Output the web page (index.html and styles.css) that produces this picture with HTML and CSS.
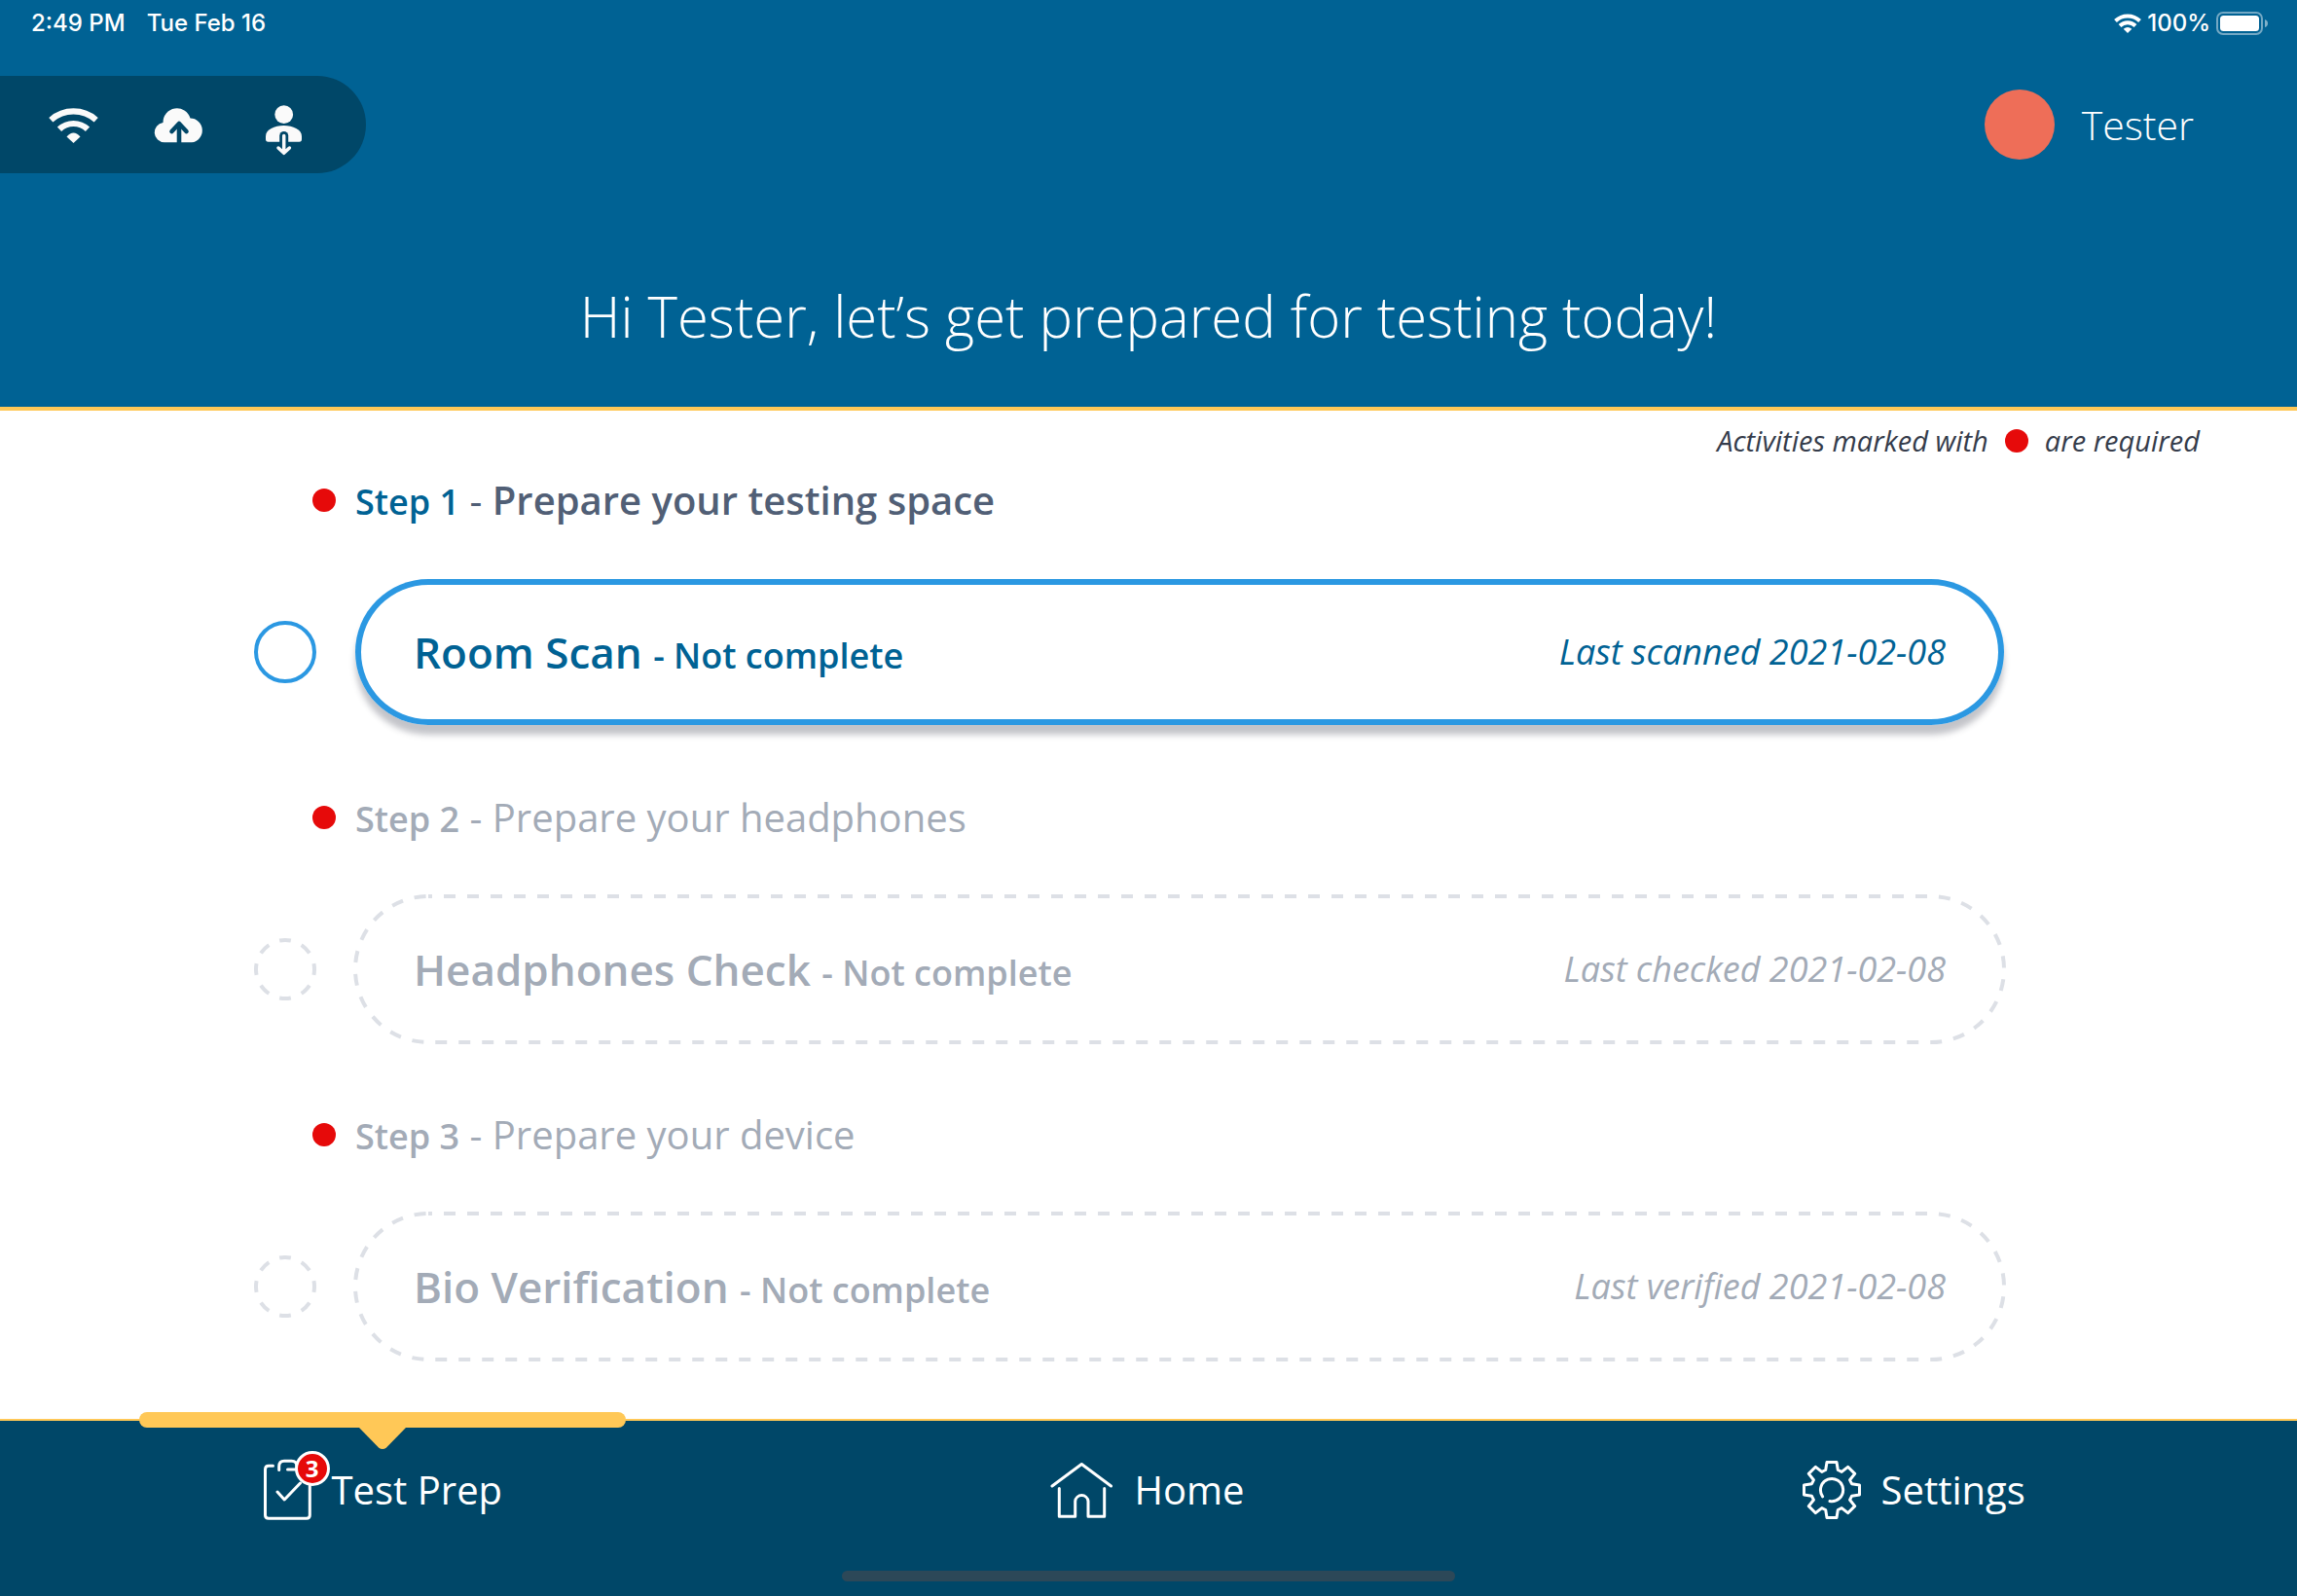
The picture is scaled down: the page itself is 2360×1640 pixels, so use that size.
FILE: index.html
```html
<!DOCTYPE html>
<html lang="en">
<head>
<meta charset="utf-8">
<meta name="viewport" content="width=device-width, initial-scale=1">
<title>Test Prep</title>
<link rel="stylesheet" href="styles.css">
</head>
<body>
<div class="app">
  <header class="header">
    <div class="status-bar">
      <div class="status-group status-left"><span>2:49 PM</span><span>Tue Feb 16</span></div>
      <div class="status-group status-right">
        <svg width="28" height="20" viewBox="0 0 28 20" aria-hidden="true">
          <g fill="none" stroke="#fff" stroke-width="4"><path d="M1.500 7.500A18 18 0 0 1 26.500 7.500"/><path d="M6 12.500A11.500 11.500 0 0 1 22 12.500"/></g>
          <path fill="#fff" d="M9.700 15.800Q14 12 18.300 15.800L14 20Z"/>
        </svg>
        <span>100%</span>
        <svg width="54" height="24" viewBox="0 0 54 24" aria-hidden="true">
          <rect x="1" y="1" width="46" height="22" rx="6" fill="none" stroke="#fff" stroke-opacity=".45" stroke-width="2"/>
          <rect x="4" y="4" width="40" height="16" rx="3.500" fill="#fff"/>
          <path d="M50 8Q53 9 53 12T50 16Z" fill="#fff" fill-opacity=".5"/>
        </svg>
      </div>
    </div>
    <div class="toolbar">
      <div class="sync-pill">
        <svg width="53" height="38" viewBox="0 0 53 38" role="img" aria-label="Wi-Fi connected">
          <g fill="none" stroke="#fafafa" stroke-width="6.200"><path d="M3.300 14.200A35 35 0 0 1 49.700 14.200"/><path d="M12 23.800A21 21 0 0 1 41 23.800"/></g>
          <path fill="#fafafa" d="M19.500 31.500Q26.500 23.500 33.500 31.500L26.500 38Z"/>
        </svg>
        <svg width="58" height="38" viewBox="0 0 58 38" role="img" aria-label="Upload">
          <path fill="#fafafa" d="M11 37.300A10.200 10.200 0 0 1 9.500 17A14.300 14.300 0 0 1 37.500 12.600A12.400 12.400 0 0 1 39 37.300Z"/>
          <g fill="none" stroke="#004768" stroke-width="4.600"><path d="M26 38V19"/><path stroke-linecap="round" stroke-linejoin="round" d="M18.500 26L26 18L33.500 26"/></g>
        </svg>
        <svg width="40" height="66" viewBox="0 -12 40 66" role="img" aria-label="User download">
          <circle cx="19.700" cy="10.700" r="9.400" fill="#fafafa"/>
          <path fill="#fafafa" d="M1 33C1 26 10 22 19.500 22S38 26 38 33V36Q38 38.700 35.500 38.700H3.500Q1 38.700 1 36Z"/>
          <path fill="none" stroke="#004768" stroke-width="9" stroke-linecap="round" d="M19.700 32.500V38.700"/>
          <path fill="none" stroke="#fafafa" stroke-width="3.500" stroke-linecap="round" stroke-linejoin="round" d="M19.700 32.500V50M14 45L19.700 50.300L25.400 45"/>
        </svg>
      </div>
      <button class="user" type="button"><span class="avatar"></span><span>Tester</span></button>
    </div>
    <h1 class="greeting">Hi Tester, let’s get prepared for testing today!</h1>
  </header>

  <main class="main">
    <p class="note">Activities marked with <span class="dot"></span> are required</p>
    <ol class="steps">
      <li class="step active">
        <h2 class="step-title"><span class="dot"></span><span class="step-text"><b class="step-number">Step 1</b> - <span class="step-name">Prepare your testing space</span></span></h2>
        <div class="step-row">
          <input class="check" type="checkbox" aria-label="Room Scan complete">
          <button class="card" type="button">
            <span class="card-content"><span class="card-title">Room Scan <small>- Not complete</small></span><em class="card-date">Last scanned 2021-02-08</em></span>
          </button>
        </div>
      </li>
      <li class="step">
        <h2 class="step-title"><span class="dot"></span><span class="step-text"><b class="step-number">Step 2</b> - <span class="step-name">Prepare your headphones</span></span></h2>
        <div class="step-row">
          <input class="check" type="checkbox" aria-label="Headphones Check complete" disabled>
          <button class="card" type="button" disabled>
            <svg class="card-outline" aria-hidden="true"><rect width="100%" height="100%" rx="75"/></svg>
            <span class="card-content"><span class="card-title">Headphones Check <small>- Not complete</small></span><em class="card-date">Last checked 2021-02-08</em></span>
          </button>
        </div>
      </li>
      <li class="step">
        <h2 class="step-title"><span class="dot"></span><span class="step-text"><b class="step-number">Step 3</b> - <span class="step-name">Prepare your device</span></span></h2>
        <div class="step-row">
          <input class="check" type="checkbox" aria-label="Bio Verification complete" disabled>
          <button class="card" type="button" disabled>
            <svg class="card-outline" aria-hidden="true"><rect width="100%" height="100%" rx="75"/></svg>
            <span class="card-content"><span class="card-title">Bio Verification <small>- Not complete</small></span><em class="card-date">Last verified 2021-02-08</em></span>
          </button>
        </div>
      </li>
    </ol>
  </main>

  <footer class="footer">
    <nav class="tabs">
      <a class="tab" href="#prep" aria-current="page">
        <svg class="marker" width="500" height="40" viewBox="0 0 500 40" aria-hidden="true">
          <rect width="500" height="16" rx="8"/><path d="M226 16L246 36.500Q250 39.500 254 36.500L274 16Z"/>
        </svg>
        <span class="tab-icon">
          <svg width="52" height="64" viewBox="0 0 52 64" aria-hidden="true">
            <path d="M11.500 7.300H7Q3.500 7.300 3.500 11V58Q3.500 61.300 7 61.300H46Q49.300 61.300 49.300 58V27"/>
            <path d="M17.700 11.500V8Q17.700 2.300 23 2.300H30.500Q36 2.300 36 8M26.500 11H36"/>
            <path d="M16 34L23.200 42L39.500 25"/>
          </svg>
          <span class="badge">3</span>
        </span>
        <span>Test Prep</span>
      </a>
      <a class="tab" href="#home">
        <svg width="66" height="60" viewBox="0 0 66 60" aria-hidden="true">
          <path d="M2 26L32.300 3.500L62.500 26"/>
          <path d="M9.300 28.500V57.300H25.700V41.500A6.700 6.700 0 0 1 39 41.500V57.300H55.700V28.500"/>
        </svg>
        <span>Home</span>
      </a>
      <a class="tab" href="#settings">
        <svg width="62" height="62" viewBox="-31 -31 62 62" aria-hidden="true">
          <path d="M-5 -28.500H5L6.300 -20.500L10.200 -18.600L16.600 -23.700L23.700 -16.600L18.600 -10.200L20.500 -6.300L28.500 -5V5L20.500 6.300L18.600 10.200L23.700 16.600L16.600 23.700L10.200 18.600L6.300 20.500L5 28.500H-5L-6.300 20.500L-10.200 18.600L-16.600 23.700L-23.700 16.600L-18.600 10.200L-20.500 6.300L-28.500 5V-5L-20.500 -6.300L-18.600 -10.200L-23.700 -16.600L-16.600 -23.700L-10.200 -18.600L-6.300 -20.500Z"/>
          <path d="M-9.400 6.800A11.600 11.600 0 1 1 -2 11.500"/>
        </svg>
        <span>Settings</span>
      </a>
    </nav>
    <div class="home-indicator"></div>
  </footer>
</div>
</body>
</html>
```
FILE: styles.css
```css
* {
  box-sizing: border-box;
}

body {
  margin: 0;
  background: #fff;
  color: #353c4b;
  font-family: "Open Sans", "Noto Sans", sans-serif;
}

button {
  padding: 0;
  border: 0;
  background: none;
  color: inherit;
  font: inherit;
}

.app {
  display: flex;
  flex-direction: column;
  min-height: 100vh;
}

/* Header */

.header {
  padding-bottom: 52px;
  border-bottom: 4px solid #ffc857;
  background: #006294;
  color: #fff;
}

.status-bar {
  display: flex;
  justify-content: space-between;
  height: 78px;
  padding: 0 29px 0 32px;
  font: 500 24px/48px Inter, sans-serif;
}

.status-group {
  display: flex;
  align-items: center;
  height: 48px;
}

.status-left {
  gap: 22px;
}

.status-right {
  gap: 6px;
}

.toolbar {
  display: flex;
  align-items: center;
  justify-content: space-between;
  padding-right: 106px;
}

.sync-pill {
  display: flex;
  align-items: center;
  gap: 56px;
  height: 100px;
  padding: 0 64px 0 49px;
  border-radius: 0 50px 50px 0;
  background: #004768;
}

.user {
  display: flex;
  align-items: center;
  gap: 28px;
  font-size: 41px;
  font-weight: 300;
  line-height: 58px;
}

.avatar {
  width: 72px;
  height: 72px;
  border-radius: 50%;
  background: #ee6e58;
}

.greeting {
  margin: 106px 0 0;
  font-size: 58px;
  font-weight: 300;
  line-height: 82px;
  text-align: center;
}

/* Steps */

.main {
  flex: 1;
  padding: 9px 100px 48px 261px;
}

.note {
  display: flex;
  align-items: center;
  justify-content: flex-end;
  gap: 17px;
  margin: 0 0 12px;
  font-size: 29px;
  font-style: italic;
  line-height: 44px;
}

.dot {
  flex: none;
  width: 24px;
  height: 24px;
  border-radius: 50%;
  background: #e60a0a;
}

.steps {
  display: grid;
  gap: 68px;
  margin: 0;
  padding: 0 201px 0 0;
  list-style: none;
}

.step {
  color: #a3abb7;
}

.step-title {
  display: flex;
  align-items: center;
  gap: 20px;
  margin: 0 0 54px;
  padding-left: 60px;
  font-size: 40px;
  font-weight: 400;
  line-height: 54px;
}

.step-number {
  font-size: 36px;
  font-weight: 600;
  line-height: 36px;
}

.active .step-title {
  color: #515f76;
}

.active .step-number {
  color: #006294;
}

.active .step-name {
  font-weight: 600;
}

.step-row {
  display: flex;
  align-items: center;
  gap: 40px;
}

.check {
  flex: none;
  width: 64px;
  height: 64px;
  margin: 0;
  appearance: none;
  background: url("data:image/svg+xml,%3Csvg xmlns='http://www.w3.org/2000/svg' viewBox='0 0 64 64'%3E%3Ccircle cx='32' cy='32' r='30' transform='rotate(-90 32 32)' fill='none' stroke='%23dde0e6' stroke-width='4' pathLength='192' stroke-dasharray='12' stroke-dashoffset='6'/%3E%3C/svg%3E");
}

.active .check {
  border: 4px solid #2b98e2;
  border-radius: 50%;
  background: none;
}

.card {
  display: grid;
  flex: 1;
  height: 150px;
  border-radius: 75px;
  text-align: left;
}

.active .card {
  background: #fff;
  box-shadow: inset 0 0 0 6px #2b98e2, 0 10px 6px rgb(40 44 60 / 28%);
  color: #006294;
}

.card-outline,
.card-content {
  grid-area: 1 / 1;
}

.card-outline {
  width: 100%;
  height: 150px;
  overflow: visible;
  fill: none;
  stroke: #dde0e6;
  stroke-width: 4;
  stroke-dasharray: 12;
  stroke-dashoffset: 8;
}

.card-content {
  display: flex;
  align-items: center;
  justify-content: space-between;
  padding: 0 60px;
}

.card-title {
  font-size: 44px;
  font-weight: 600;
  line-height: 60px;
}

.card-title small {
  font-size: 36px;
  line-height: 36px;
}

.card-date {
  font-size: 36px;
  line-height: 48px;
}

/* Bottom tabs */

.footer {
  border-top: 2px solid #ffc857;
  background: #004768;
  color: #fff;
}

.tabs {
  display: grid;
  grid-template-columns: repeat(3, 1fr);
}

.tab {
  position: relative;
  display: flex;
  align-items: center;
  justify-content: center;
  gap: 20px;
  height: 140px;
  padding: 2px 2px 0 0;
  color: #fff;
  font-size: 40px;
  line-height: 54px;
  text-decoration: none;
}

.tab svg {
  fill: none;
  stroke: #fff;
  stroke-width: 3;
  stroke-linecap: round;
  stroke-linejoin: round;
}

.tab .marker {
  position: absolute;
  top: -9px;
  left: 50%;
  transform: translateX(-50%);
  fill: #ffc857;
  stroke: none;
}

.tab-icon {
  position: relative;
  display: flex;
}

.badge {
  position: absolute;
  top: -8px;
  left: 34px;
  width: 36px;
  height: 36px;
  border: 3px solid #fff;
  border-radius: 50%;
  background: #e60a0a;
  font-size: 24px;
  font-weight: 700;
  line-height: 30px;
  text-align: center;
}

.home-indicator {
  width: 630px;
  height: 11px;
  margin: 14px auto 15px;
  border-radius: 6px;
  background: #2c4858;
}
```
